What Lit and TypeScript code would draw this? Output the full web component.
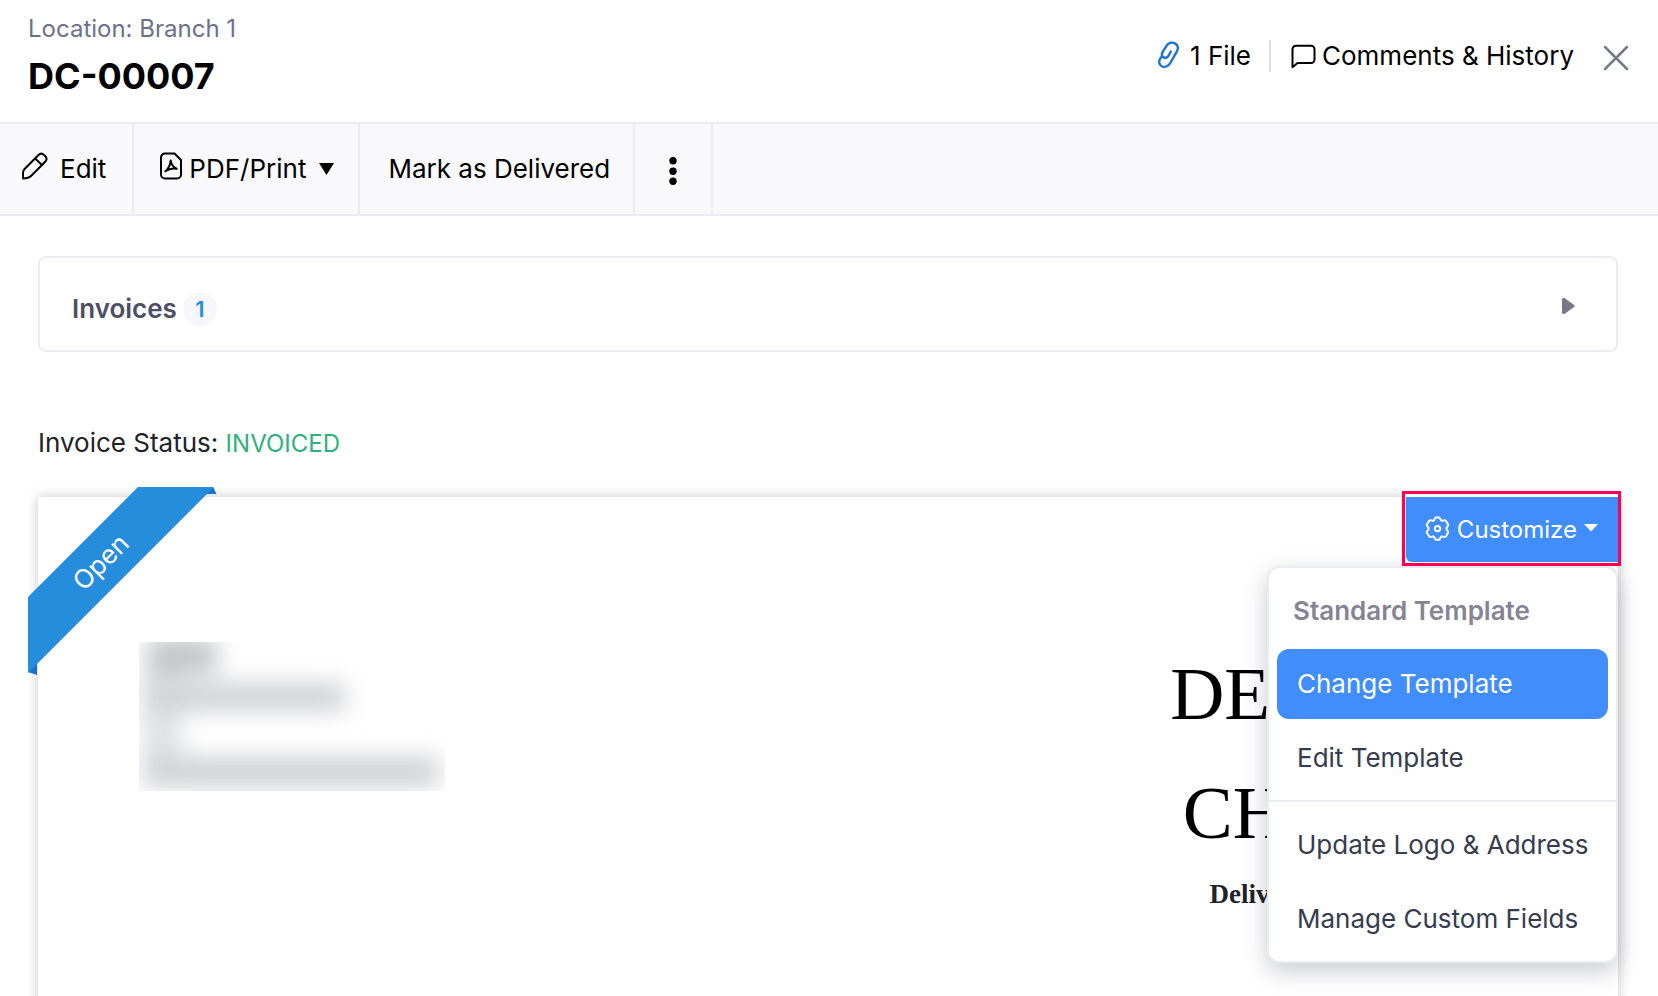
import { LitElement, html, css } from "lit";
import { customElement } from "lit/decorators.js";

@customElement("app-root")
export class AppRoot extends LitElement {
  static styles = css`
    :host {
      display: flex;
      flex-direction: column;
      height: 100vh;
      overflow: hidden;
      background: #fff;
      color: #000;
      font: 26px/32px Inter, "Liberation Sans", sans-serif;
    }
    * { box-sizing: border-box; }
    svg { display: block; flex: none; }
    button {
      font: inherit;
      color: inherit;
      background: none;
      border: 0;
      margin: 0;
      padding: 0;
      display: flex;
      align-items: center;
      white-space: nowrap;
      cursor: pointer;
    }
    h1, h2, h3, p { margin: 0; }

    .header {
      display: flex;
      justify-content: space-between;
      padding: 13px 28px 24px;
    }
    .location { font-size: 24px; color: #6c718a; }
    .number { font-size: 36px; line-height: 44px; font-weight: 700; padding-top: 9px; }
    .header .tools { display: flex; align-items: flex-start; padding-top: 27px; }
    .files { gap: 10px; padding-right: 18px; }
    .comments { gap: 6px; padding-left: 20px; border-left: 2px solid #dfe0e8; }
    .close { padding: 5px 1px 0 29px; }

    .toolbar {
      display: flex;
      flex: none;
      background: #f9f9fb;
      border-top: 2px solid #ebebf2;
      border-bottom: 2px solid #ebebf2;
    }
    .toolbar button { height: 90px; border-right: 2px solid #ebebf2; }
    .edit { gap: 12px; padding: 0 26px 0 21px; }
    .pdf { gap: 6px; padding: 0 24px 0 25px; }
    .pdf .caret { margin-left: 7px; }
    .mark { padding: 0 23px 0 28px; }
    .more { padding: 4px 34px 0; }

    .content { padding: 40px 40px 0 38px; flex: none; }
    .invoices {
      width: 100%;
      height: 96px;
      border: 2px solid #ebebf2;
      border-radius: 8px;
      padding: 10px 40px 0 32px;
    }
    .invoices h2 { font-size: 26px; font-weight: 600; color: #4c4f63; line-height: 34px; }
    .count {
      width: 34px;
      height: 34px;
      margin-left: 6px;
      border-radius: 50%;
      background: #f7f7fb;
      color: #268ddd;
      font-size: 22px;
      font-weight: 600;
      line-height: 34px;
      text-align: center;
    }
    .invoices .arrow { margin: 0 0 6px auto; }
    .status { padding: 75px 0 37px; color: #21222a; }
    .status span { font-size: 24px; color: #2bb27b; }

    .paper {
      position: relative;
      min-height: 700px;
      display: flex;
      justify-content: space-between;
      padding: 137px 77px 0 101px;
      background: #fff;
      box-shadow: 0 0 12px rgba(0, 0, 0, 0.22);
    }
    .ribbon { position: absolute; left: -10px; top: -10px; }
    .redacted { margin-top: 8px; }
    .title { text-align: right; font-family: "Liberation Serif", serif; width: 400px; }
    .title h2 { font-size: 75px; line-height: 119px; font-weight: 400; }
    .title p { padding-top: 6px; font-size: 27px; line-height: 32px; font-weight: 700; color: #21222a; white-space: nowrap; }

    .customize { position: absolute; right: -3px; top: -6px; border: 3px solid #ff0055; padding: 3px 0 1px 1px; background: #fff; }
    .customize button {
      height: 65px;
      padding: 0 20px 0 19px;
      gap: 7px;
      background: #408dfb;
      color: #fff;
      font-size: 24px;
      border-radius: 0 0 0 6px;
    }
    .menu {
      position: absolute;
      right: 0;
      top: 69px;
      width: 351px;
      background: #fff;
      border: 2px solid #ebebf2;
      border-radius: 12px;
      padding: 27px 0 0;
      box-shadow: 0 8px 24px rgba(33, 38, 60, 0.24);
      color: #363c50;
    }
    .menu h3 { padding: 0 24px; font-size: 26px; line-height: 32px; font-weight: 600; color: #858495; }
    .group { display: flex; flex-direction: column; gap: 4px; padding: 8px 8px 7px; }
    .menu h3 + .group { padding-top: 22px; }
    .group + .group { border-top: 2px solid #ebebf2; }
    .group button { height: 70px; padding: 0 20px; border-radius: 12px; }
    .group .active { background: #408dfb; color: #fff; }
  `;

  private header() {
    return html`
      <header class="header">
        <div>
          <p class="location">Location: Branch 1</p>
          <h1 class="number">DC-00007</h1>
        </div>
        <div class="tools">
          <button class="files">
            <svg width="22" height="30" viewBox="0 0 22 30" fill="none" stroke="#1f73d8" stroke-width="2.400" stroke-linecap="round" stroke-linejoin="round">
              <path d="M12.800 10.500 10.600 14.600C9.300 17 6.800 17.300 5.300 16.200 3.600 15 3.700 12.800 4.600 11.200L8.600 4.600C10.500 1.400 14.500.9 17.300 2.600 20.200 4.300 20.400 7.600 18.900 10.300L13 20.800C11.200 24.200 8.300 26.600 4.600 25.600 1.300 24.500.5 21 1.900 18.200L3 16.300" />
            </svg>
            <span>1 File</span>
          </button>
          <button class="comments">
            <svg width="25" height="25" viewBox="0 0 25 25" fill="none" stroke="#000" stroke-width="2" stroke-linejoin="round">
              <path d="M1.500 23.200V5.200a3.500 3.500 0 0 1 3.500-3.500h15a3.500 3.500 0 0 1 3.500 3.500V15.500a3.500 3.500 0 0 1-3.500 3.500H6.500Z" />
            </svg>
            <span>Comments &amp; History</span>
          </button>
          <button class="close" aria-label="Close">
            <svg width="26" height="26" viewBox="0 0 26 26" stroke="#777a8a" stroke-width="2.500" stroke-linecap="round">
              <path d="M2 2 24 24M24 2 2 24" />
            </svg>
          </button>
        </div>
      </header>
    `;
  }

  private toolbar() {
    return html`
      <nav class="toolbar">
        <button class="edit">
          <svg width="27" height="34" viewBox="0 0 27 34" fill="none" stroke="#000" stroke-width="2" stroke-linejoin="round">
            <path d="M2 26.500V20.800C2 19.300 2.600 18 3.600 17L17.500 3C19.300 1.300 21.300 1.300 23 2.900L24.300 4.200C26 5.900 26 7.900 24.200 9.700L10.500 23.500C8.500 25.600 6 26.500 2 26.500ZM14.200 6.500 20.900 13" />
          </svg>
          <span>Edit</span>
        </button>
        <button class="pdf">
          <svg width="24" height="34" viewBox="0 0 24 34" fill="none" stroke="#000" stroke-width="2" stroke-linejoin="round" stroke-linecap="round">
            <path d="M6 1.500h9.500L22 8v14.500a4 4 0 0 1-4 4H6a4 4 0 0 1-4-4v-17a4 4 0 0 1 4-4Z" />
            <path d="M6.300 19.200C9.500 17 11.300 12 11.700 8.400 12.300 12.500 14.500 15.500 17.700 16.800 13.500 16 9.500 17 6.300 19.200Z" />
          </svg>
          <span>PDF/Print</span>
          <svg class="caret" width="15" height="12" viewBox="0 0 15 12"><path d="M0 0h15L7.500 12Z" /></svg>
        </button>
        <button class="mark">Mark as Delivered</button>
        <button class="more" aria-label="More actions">
          <svg width="8" height="28" viewBox="0 0 8 28">
            <circle cx="4" cy="3.700" r="3.700" /><circle cx="4" cy="14.200" r="3.700" /><circle cx="4" cy="24.300" r="3.700" />
          </svg>
        </button>
      </nav>
    `;
  }

  private ribbon() {
    return html`
      <svg class="ribbon" width="190" height="190" viewBox="0 0 190 190">
        <path d="M178 0h7l3.500 7H172ZM0 178v7l9 3V174Z" fill="#1c6fcb" />
        <path d="M110 0h76L0 186v-76Z" fill="#268ddd" />
        <text x="74" y="83" transform="rotate(-45 75 76)" text-anchor="middle" font-family="Inter, sans-serif" font-size="26" fill="#fff">Open</text>
      </svg>
    `;
  }

  private redacted() {
    return html`
      <svg class="redacted" width="306" height="149" viewBox="0 0 306 149" aria-hidden="true">
        <defs>
          <filter id="soft" x="-60" y="-60" width="426" height="269" filterUnits="userSpaceOnUse" color-interpolation-filters="sRGB">
            <feGaussianBlur stdDeviation="12 11" />
          </filter>
          <clipPath id="frame"><path d="M0 0h306v149H0Z" /></clipPath>
        </defs>
        <g clip-path="url(#frame)">
          <g filter="url(#soft)" fill="#d2d3d6">
            <rect x="4" y="28" width="38" height="114" fill="#dfe0e3" />
            <rect x="8" y="-4" width="70" height="36" fill="#c3c6c8" />
            <rect x="4" y="40" width="202" height="30" />
            <rect x="4" y="114" width="296" height="32" />
          </g>
        </g>
      </svg>
    `;
  }

  private customize() {
    return html`
      <div class="menu" role="menu">
        <h3>Standard Template</h3>
        <div class="group">
          <button class="active" role="menuitem">Change Template</button>
          <button role="menuitem">Edit Template</button>
        </div>
        <div class="group">
          <button role="menuitem">Update Logo &amp; Address</button>
          <button role="menuitem">Manage Custom Fields</button>
        </div>
      </div>
      <div class="customize">
        <button aria-haspopup="menu" aria-expanded="true">
          <svg width="25" height="28" viewBox="0 0 25 28" fill="none" stroke="#fff" stroke-width="2" stroke-linejoin="round">
            <path d="M10.500 1.500h4Q15.700 4.700 17 4.900 19.500 3.700 20.800 4.700L23.300 8.700Q23 10.300 21.600 11.500V13.700Q23.200 15 23.300 16.500L20.800 20.500Q19.500 21.400 17 20.300 15.700 20.800 14.500 23.700h-4Q9.300 20.800 8 20.300 5.500 21.400 4.200 20.500L1.700 16.500Q1.800 15 3.400 13.700V11.500Q2 10.300 1.700 8.700L4.200 4.700Q5.500 3.700 8 4.900 9.300 4.700 10.500 1.500Z" />
            <circle cx="12.500" cy="12.600" r="2.700" />
          </svg>
          <span>Customize</span>
          <svg width="14" height="11" viewBox="0 0 14 11"><path d="M0 0h14L7 7.500Z" fill="#fff" /></svg>
        </button>
      </div>
    `;
  }

  render() {
    return html`
      ${this.header()} ${this.toolbar()}
      <main class="content">
        <button class="invoices" aria-expanded="false">
          <h2>Invoices</h2>
          <span class="count">1</span>
          <svg class="arrow" width="14" height="16" viewBox="0 0 14 16"><path d="M0 .500 2.500 0 12.500 7.200V8.800L2.500 16 0 15.500Z" fill="#777a86" /></svg>
        </button>
        <p class="status">Invoice Status: <span>INVOICED</span></p>
        <article class="paper">
          ${this.ribbon()} ${this.redacted()}
          <div class="title">
            <h2>DELIVERY CHALLAN</h2>
            <p>Delivery Challan# DC-00007</p>
          </div>
          ${this.customize()}
        </article>
      </main>
    `;
  }
}
